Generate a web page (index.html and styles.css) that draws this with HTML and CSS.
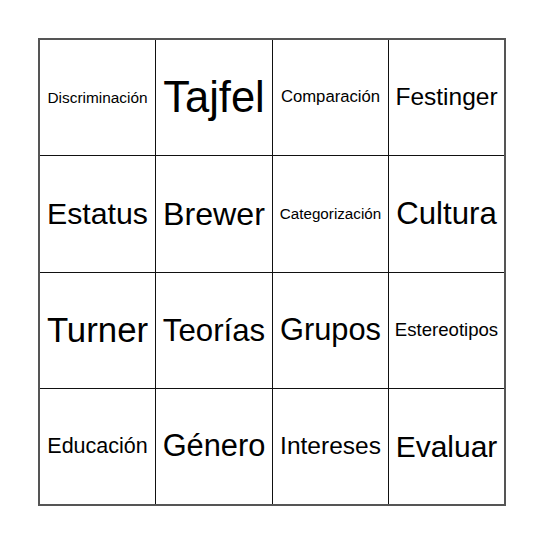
FILE: index.html
```html
<!DOCTYPE html>
<html>
<head>
<meta charset="utf-8">
<link rel="stylesheet" href="styles.css">
</head>
<body>
<div class="board">
  <div class="cell"><span class="s15">Discriminación</span></div>
  <div class="cell"><span class="s41">Tajfel</span></div>
  <div class="cell"><span class="s16">Comparación</span></div>
  <div class="cell"><span class="s24">Festinger</span></div>
  <div class="cell"><span class="s30">Estatus</span></div>
  <div class="cell"><span class="s32">Brewer</span></div>
  <div class="cell"><span class="s15b">Categorización</span></div>
  <div class="cell"><span class="s31">Cultura</span></div>
  <div class="cell"><span class="s34">Turner</span></div>
  <div class="cell"><span class="s31">Teorías</span></div>
  <div class="cell"><span class="s30b">Grupos</span></div>
  <div class="cell"><span class="s18">Estereotipos</span></div>
  <div class="cell"><span class="s21">Educación</span></div>
  <div class="cell"><span class="s30b">Género</span></div>
  <div class="cell"><span class="s24">Intereses</span></div>
  <div class="cell"><span class="s29">Evaluar</span></div>
</div>
</body>
</html>
```
FILE: styles.css
```css
html, body {
  margin: 0;
  padding: 0;
  background: #fff;
}
body {
  padding: 38px 0 0 38px;
  font-family: "Liberation Sans", Arial, sans-serif;
  color: #000;
}
.board {
  display: grid;
  grid-template-columns: 116px 117px 116px 115px;
  grid-template-rows: 116px 117px 116px 115px;
  width: 464px;
  border: 2px solid #555;
}
.cell {
  display: flex;
  align-items: center;
  justify-content: center;
  border-right: 1px solid #111;
  border-bottom: 1px solid #111;
  white-space: nowrap;
  line-height: 1;
}
.cell:nth-child(4n) { border-right: none; }
.cell:nth-child(n+13) { border-bottom: none; }
.s15 { font-size: 15.4px; }
.s15b { font-size: 15.2px; }
.s16 { font-size: 16.7px; }
.s18 { font-size: 18.6px; }
.s21 { font-size: 21.5px; }
.s24 { font-size: 24.5px; }
.s29 { font-size: 30px; }
.s30 { font-size: 30.3px; }
.s30b { font-size: 30.8px; }
.s31 { font-size: 31.2px; }
.s32 { font-size: 32.2px; }
.s34 { font-size: 34.8px; }
.s41 { font-size: 43.5px; }
```
